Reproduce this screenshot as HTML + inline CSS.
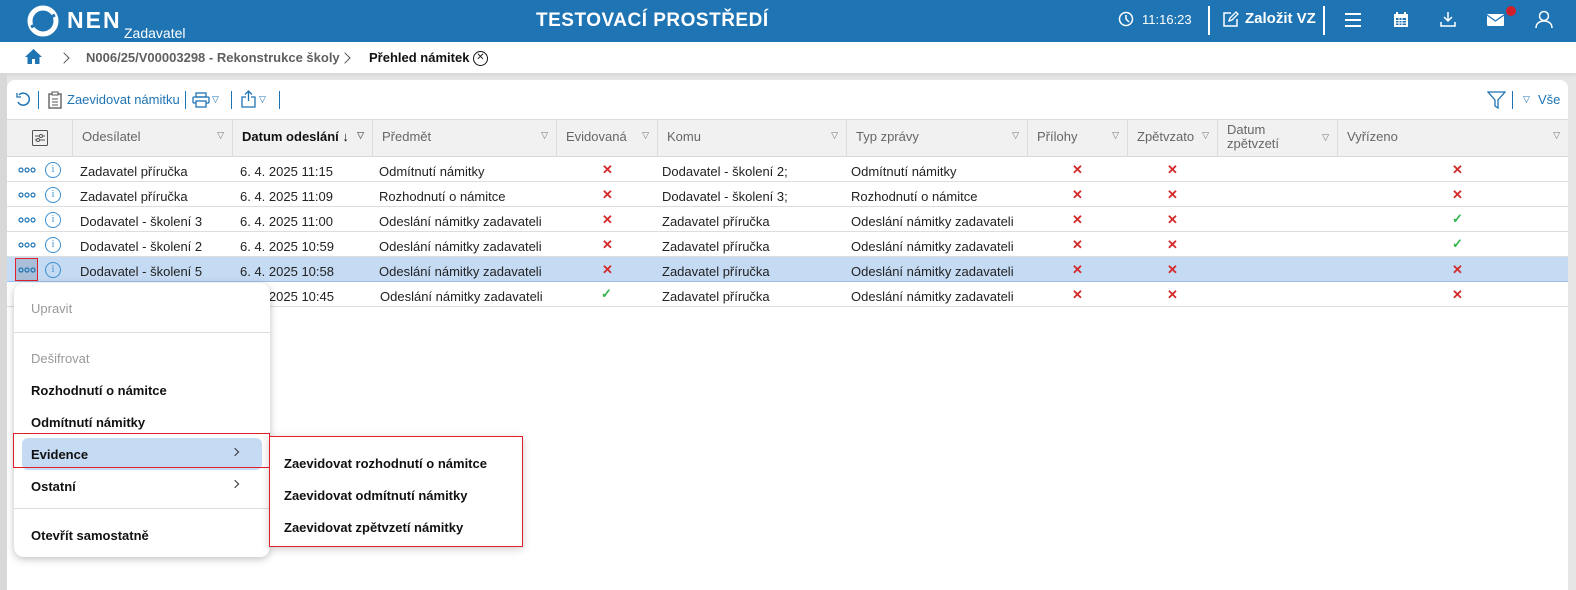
<!DOCTYPE html>
<html><head><meta charset="utf-8"><style>
*{box-sizing:border-box;margin:0;padding:0}
body{width:1576px;height:590px;overflow:hidden;background:#e6e6e6;font-family:"Liberation Sans",Arial,sans-serif;position:relative;font-size:13px;color:#222}
.a{position:absolute}
.top{left:0;top:0;width:1576px;height:42px;background:#1f74b3;color:#fff}
.bc{left:0;top:42px;width:1576px;height:31px;background:#fff;box-shadow:0 2px 4px rgba(0,0,0,.08)}
.card{left:7px;top:80px;width:1561px;height:510px;background:#fff;border-radius:8px 8px 0 0}
.hd{top:119px;height:38px;background:#f1f1f1;border-top:1px solid #ddd;border-bottom:1px solid #d8d8d8}
.hc{top:119px;height:38px;border-left:1px solid #ddd;color:#666;padding:10px 0 0 9px;font-size:13px}
.tri{position:absolute;right:8px;top:11px;font-size:9px;color:#777}
.row{left:7px;width:1561px;height:25px;border-bottom:1px solid #ddd}
.c{position:absolute;top:7px;font-size:13px;color:#222;white-space:nowrap}
.x{position:absolute;top:5px;color:#d42a2a;font-weight:bold;font-size:13px}
.v{position:absolute;top:4px;color:#2fb34a;font-weight:bold;font-size:13px}
.dots{position:absolute;left:11px;top:10px}
.info{position:absolute;left:38px;top:5px;width:16px;height:16px;border:1.3px solid #3b8ed0;border-radius:50%;color:#3b8ed0;font-size:10px;text-align:center;line-height:14px;font-family:"Liberation Serif",serif}
.menu{left:14px;top:283px;width:256px;height:274px;background:#fff;border-radius:10px;box-shadow:0 2px 8px rgba(0,0,0,.25)}
.mi{position:absolute;left:17px;font-size:13px;font-weight:bold;color:#111}
.sep{position:absolute;left:0;width:256px;height:1px;background:#ddd}
.chev{position:absolute;width:8px;height:8px;border-right:1.3px solid #555;border-top:1.3px solid #555;transform:rotate(45deg)}
</style></head><body>
<div class="a top">
 <svg class="a" style="left:27px;top:5px" width="32" height="32" viewBox="0 0 32 32"><circle cx="16" cy="16" r="13" fill="none" stroke="#fff" stroke-width="5"/><path d="M4 22 L28 10" stroke="#1f74b3" stroke-width="3"/></svg>
 <div class="a" style="left:67px;top:7px;font-size:23px;font-weight:bold;letter-spacing:2px">NEN</div>
 <div class="a" style="left:124px;top:25px;font-size:14px">Zadavatel</div>
 <div class="a" style="left:536px;top:10px;font-size:19px;font-weight:bold;letter-spacing:.5px">TESTOVACÍ PROSTŘEDÍ</div>
 <svg class="a" style="left:1118px;top:11px" width="16" height="16"><circle cx="8" cy="8" r="6.5" fill="none" stroke="#fff" stroke-width="1.5"/><path d="M8 4v4l3 3" stroke="#fff" stroke-width="1.5" fill="none"/></svg>
 <div class="a" style="left:1142px;top:12px;font-size:13px">11:16:23</div>
 <div class="a" style="left:1208px;top:6px;width:2px;height:29px;background:#fff"></div>
 <svg class="a" style="left:1222px;top:11px" width="17" height="17"><path d="M9 2H2v13h13V8" fill="none" stroke="#fff" stroke-width="1.5"/><path d="M7 10l1-3 6-6 2 2-6 6z" fill="none" stroke="#fff" stroke-width="1.3"/></svg>
 <div class="a" style="left:1245px;top:10px;font-size:15px;font-weight:bold">Založit VZ</div>
 <div class="a" style="left:1323px;top:6px;width:2px;height:29px;background:#fff"></div>
 <div class="a" style="left:1345px;top:13px;width:16px;height:2px;background:#fff;box-shadow:0 6px 0 #fff,0 12px 0 #fff"></div>
 <svg class="a" style="left:1393px;top:11px" width="16" height="17"><rect x="1" y="3" width="14" height="13" fill="#fff"/><rect x="3" y="7" width="10" height="7" fill="#1f74b3"/><path d="M4 1v4M12 1v4" stroke="#fff" stroke-width="2"/><path d="M3 9.5h10M3 12h10M6 7v7M9 7v7" stroke="#fff"/></svg>
 <svg class="a" style="left:1440px;top:11px" width="16" height="17"><path d="M8 1v9M4 6l4 4 4-4" stroke="#fff" stroke-width="1.5" fill="none"/><path d="M1 11v4h14v-4" stroke="#fff" stroke-width="1.5" fill="none"/></svg>
 <svg class="a" style="left:1487px;top:13px" width="17" height="13"><rect x="0" y="1" width="17" height="12" rx="1" fill="#fff"/><path d="M0 2l8.5 6L17 2" stroke="#1f74b3" stroke-width="1.3" fill="none"/></svg>
 <div class="a" style="left:1506px;top:6px;width:10px;height:10px;border-radius:50%;background:#d0202a"></div>
 <svg class="a" style="left:1535px;top:10px" width="18" height="19"><circle cx="9" cy="6" r="4.5" fill="none" stroke="#fff" stroke-width="1.5"/><path d="M1 18c0-5 4-7 8-7s8 2 8 7" fill="none" stroke="#fff" stroke-width="1.5"/></svg>
</div>
<div class="a bc">
 <svg class="a" style="left:25px;top:7px" width="17" height="15"><path d="M8.5 0L0 8h2.5v7h4.5v-5h3v5h4.5V8H17z" fill="#1f74b3"/></svg>
 <div class="chev" style="left:60px;top:12px"></div>
 <div class="a" style="left:86px;top:8px;font-size:13px;color:#444;font-weight:bold;opacity:.85">N006/25/V00003298 - Rekonstrukce školy</div>
 <div class="chev" style="left:341px;top:12px"></div>
 <div class="a" style="left:369px;top:8px;font-size:13px;font-weight:bold;color:#111">Přehled námitek</div>
 <div class="a" style="left:473px;top:9px;width:15px;height:15px;border:1.4px solid #111;border-radius:50%;font-size:10px;text-align:center;line-height:12px">✕</div>
</div>
<div class="a card"></div>
<div class="a" style="left:0;top:73px;width:7px;height:517px;background:#d8d8d8"></div>
<svg class="a" style="left:15px;top:91px" width="17" height="17"><path d="M4 4a6 6 0 1 1-1 7" fill="none" stroke="#1f74b3" stroke-width="1.5"/><path d="M2 2v4h4" fill="none" stroke="#1f74b3" stroke-width="1.3"/></svg>
<div class="a" style="left:38px;top:91px;width:1px;height:18px;background:#1f74b3"></div>
<svg class="a" style="left:48px;top:91px" width="14" height="18"><rect x="1" y="3" width="12" height="14" fill="none" stroke="#555" stroke-width="1.3"/><rect x="4" y="1" width="6" height="3" fill="#fff" stroke="#555"/><path d="M4 8h6M4 11h6M4 14h6" stroke="#555"/></svg>
<div class="a" style="left:67px;top:92px;color:#1f74b3;font-size:13px">Zaevidovat námitku</div>
<div class="a" style="left:185px;top:91px;width:1px;height:18px;background:#1f74b3"></div>
<svg class="a" style="left:192px;top:92px" width="18" height="16"><rect x="4" y="1" width="10" height="4" fill="none" stroke="#1f74b3" stroke-width="1.3"/><rect x="1" y="5" width="16" height="6" rx="1" fill="none" stroke="#1f74b3" stroke-width="1.3"/><rect x="4" y="9" width="10" height="6" fill="#fff" stroke="#1f74b3" stroke-width="1.3"/></svg>
<div class="a" style="left:212px;top:94px;color:#1f74b3;font-size:9px">▽</div>
<div class="a" style="left:231px;top:91px;width:1px;height:18px;background:#1f74b3"></div>
<svg class="a" style="left:241px;top:90px" width="15" height="18"><path d="M7.5 1v10M4 4.5l3.5-3.5 3.5 3.5" fill="none" stroke="#1f74b3" stroke-width="1.3"/><path d="M5 7H1v10h13V7h-4" fill="none" stroke="#1f74b3" stroke-width="1.3"/></svg>
<div class="a" style="left:259px;top:94px;color:#1f74b3;font-size:9px">▽</div>
<div class="a" style="left:279px;top:91px;width:1px;height:18px;background:#1f74b3"></div>
<svg class="a" style="left:1487px;top:91px" width="19" height="18"><path d="M1 1h17l-7 8v8l-3-2V9z" fill="none" stroke="#1f74b3" stroke-width="1.3"/></svg>
<div class="a" style="left:1512px;top:91px;width:1px;height:18px;background:#1f74b3"></div>
<div class="a" style="left:1523px;top:94px;color:#1f74b3;font-size:9px">▽</div>
<div class="a" style="left:1538px;top:92px;color:#1f74b3;font-size:13px">Vše</div>

<div class="a hd" style="left:7px;width:1561px"></div>
<svg class="a" style="left:32px;top:130px" width="16" height="16"><rect x=".5" y=".5" width="15" height="15" rx="1" fill="none" stroke="#555"/><path d="M3 6h10M3 10h10" stroke="#555"/><circle cx="9" cy="6" r="1.5" fill="#fff" stroke="#555"/><circle cx="6" cy="10" r="1.5" fill="#fff" stroke="#555"/></svg>
<div class="a hc" style="left:72px;width:160px">Odesílatel<span class="tri">▽</span></div>
<div class="a hc" style="left:232px;width:140px;color:#111;font-weight:bold">Datum odeslání <span style="font-weight:normal">↓</span><span class="tri">▽</span></div>
<div class="a hc" style="left:372px;width:184px">Předmět<span class="tri">▽</span></div>
<div class="a hc" style="left:556px;width:101px">Evidovaná<span class="tri">▽</span></div>
<div class="a hc" style="left:657px;width:189px">Komu<span class="tri">▽</span></div>
<div class="a hc" style="left:846px;width:181px">Typ zprávy<span class="tri">▽</span></div>
<div class="a hc" style="left:1027px;width:100px">Přílohy<span class="tri">▽</span></div>
<div class="a hc" style="left:1127px;width:90px">Zpětvzato<span class="tri">▽</span></div>
<div class="a hc" style="left:1217px;width:120px;padding-top:4px;line-height:14px">Datum<br>zpětvzetí<span class="tri">▽</span></div>
<div class="a hc" style="left:1337px;width:231px">Vyřízeno<span class="tri">▽</span></div>

<svg width="0" height="0" style="position:absolute"><defs><g id="d"><circle cx="3" cy="3" r="2" fill="none" stroke="#1f74b3" stroke-width="1.2"/><circle cx="9" cy="3" r="2" fill="none" stroke="#1f74b3" stroke-width="1.2"/><circle cx="15" cy="3" r="2" fill="none" stroke="#1f74b3" stroke-width="1.2"/></g></defs></svg>

<div class="a row" style="top:157px"><svg class="dots" width="18" height="6"><use href="#d"/></svg><span class="info">i</span><span class="c" style="left:73px">Zadavatel příručka</span><span class="c" style="left:233px">6. 4. 2025 11:15</span><span class="c" style="left:372px">Odmítnutí námitky</span><span class="x" style="left:595px">✕</span><span class="c" style="left:655px">Dodavatel - školení 2;</span><span class="c" style="left:844px">Odmítnutí námitky</span><span class="x" style="left:1065px">✕</span><span class="x" style="left:1160px">✕</span><span class="x" style="left:1445px">✕</span></div>
<div class="a row" style="top:182px"><svg class="dots" width="18" height="6"><use href="#d"/></svg><span class="info">i</span><span class="c" style="left:73px">Zadavatel příručka</span><span class="c" style="left:233px">6. 4. 2025 11:09</span><span class="c" style="left:372px">Rozhodnutí o námitce</span><span class="x" style="left:595px">✕</span><span class="c" style="left:655px">Dodavatel - školení 3;</span><span class="c" style="left:844px">Rozhodnutí o námitce</span><span class="x" style="left:1065px">✕</span><span class="x" style="left:1160px">✕</span><span class="x" style="left:1445px">✕</span></div>
<div class="a row" style="top:207px"><svg class="dots" width="18" height="6"><use href="#d"/></svg><span class="info">i</span><span class="c" style="left:73px">Dodavatel - školení 3</span><span class="c" style="left:233px">6. 4. 2025 11:00</span><span class="c" style="left:372px">Odeslání námitky zadavateli</span><span class="x" style="left:595px">✕</span><span class="c" style="left:655px">Zadavatel příručka</span><span class="c" style="left:844px">Odeslání námitky zadavateli</span><span class="x" style="left:1065px">✕</span><span class="x" style="left:1160px">✕</span><span class="v" style="left:1445px">✓</span></div>
<div class="a row" style="top:232px"><svg class="dots" width="18" height="6"><use href="#d"/></svg><span class="info">i</span><span class="c" style="left:73px">Dodavatel - školení 2</span><span class="c" style="left:233px">6. 4. 2025 10:59</span><span class="c" style="left:372px">Odeslání námitky zadavateli</span><span class="x" style="left:595px">✕</span><span class="c" style="left:655px">Zadavatel příručka</span><span class="c" style="left:844px">Odeslání námitky zadavateli</span><span class="x" style="left:1065px">✕</span><span class="x" style="left:1160px">✕</span><span class="v" style="left:1445px">✓</span></div>
<div class="a row" style="top:257px;background:#c5daf3;border-bottom-color:#9cc0e8"><span class="a" style="left:8px;top:1px;width:23px;height:23px;border:1px solid #e0202a;background:#a9bfd8"></span><svg class="dots" width="18" height="6"><use href="#d"/></svg><span class="info">i</span><span class="c" style="left:73px">Dodavatel - školení 5</span><span class="c" style="left:233px">6. 4. 2025 10:58</span><span class="c" style="left:372px">Odeslání námitky zadavateli</span><span class="x" style="left:595px">✕</span><span class="c" style="left:655px">Zadavatel příručka</span><span class="c" style="left:844px">Odeslání námitky zadavateli</span><span class="x" style="left:1065px">✕</span><span class="x" style="left:1160px">✕</span><span class="x" style="left:1445px">✕</span></div>
<div class="a row" style="top:282px"><span class="c" style="left:233px">6. 4. 2025 10:45</span><span class="c" style="left:373px">Odeslání námitky zadavateli</span><span class="v" style="left:594px">✓</span><span class="c" style="left:655px">Zadavatel příručka</span><span class="c" style="left:844px">Odeslání námitky zadavateli</span><span class="x" style="left:1065px">✕</span><span class="x" style="left:1160px">✕</span><span class="x" style="left:1445px">✕</span></div>

<div class="a menu">
 <div class="mi" style="top:18px;color:#999;font-weight:normal">Upravit</div>
 <div class="sep" style="top:49px"></div>
 <div class="mi" style="top:68px;color:#999;font-weight:normal">Dešifrovat</div>
 <div class="mi" style="top:100px">Rozhodnutí o námitce</div>
 <div class="mi" style="top:132px">Odmítnutí námitky</div>
 <div class="a" style="left:8px;top:155px;width:240px;height:32px;background:#c5daf3;border-radius:6px"></div>
 <div class="mi" style="top:164px">Evidence</div>
 <div class="chev" style="left:218px;top:166px;width:6px;height:6px;border-color:#333"></div>
 <div class="mi" style="top:196px">Ostatní</div>
 <div class="chev" style="left:218px;top:198px;width:6px;height:6px;border-color:#333"></div>
 <div class="sep" style="top:225px"></div>
 <div class="mi" style="top:245px">Otevřít samostatně</div>
</div>
<div class="a" style="left:13px;top:433px;width:257px;height:35px;border:1px solid #e0202a"></div>
<div class="a" style="left:269px;top:436px;width:254px;height:111px;background:#fff;border:1px solid #e0202a;box-shadow:0 2px 8px rgba(0,0,0,.2)">
 <div class="mi" style="left:14px;top:19px">Zaevidovat rozhodnutí o námitce</div>
 <div class="mi" style="left:14px;top:51px">Zaevidovat odmítnutí námitky</div>
 <div class="mi" style="left:14px;top:83px">Zaevidovat zpětvzetí námitky</div>
</div>
</body></html>
